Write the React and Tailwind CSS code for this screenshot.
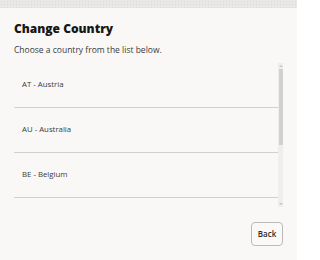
import React from "react";

const countries = ["AT - Austria", "AU - Australia", "BE - Belgium"];

export default function App() {
  return (
    <div className="w-[297px] h-[260px] bg-[#f9f8f7] flex flex-col overflow-hidden font-['Open_Sans',sans-serif] text-[#1f1f1f]">
      {/* textured top strip */}
      <div className="h-2 shrink-0 bg-[#e9e8e6] bg-[radial-gradient(#dcdad8_0.6px,transparent_0.8px)] bg-size-[3px_3px]" />

      <div className="flex flex-col px-[14px] pt-[13px]">
        <h2 className="text-[12px] leading-[16px] font-extrabold text-[#161616]">Change Country</h2>
        <p className="mt-[7px] text-[8.5px] leading-[12px] text-[#3a3a3a]">Choose a country from the list below.</p>

        {/* list with scrollbar */}
        <div className="mt-[7px] flex h-[144px]">
          <div className="flex-1 overflow-hidden">
            {countries.map((c) => (
              <div key={c} className="h-[45px] shrink-0 flex items-center pl-[8px] border-b border-[#d2d0ce] text-[7.8px] text-[#3a3a3a]">
                {c}
              </div>
            ))}
          </div>
          <div className="w-[5px] bg-[#efeeed] flex flex-col items-center">
            <div className="h-[6px] w-full flex items-center justify-center">
              <div className="w-0 h-0 border-x-[2px] border-x-transparent border-b-[2px] border-b-[#c8c6c4]" />
            </div>
            <div className="h-[76px] w-[4px] bg-[#d2d0ce]" />
            <div className="flex-1" />
            <div className="h-[6px] w-full flex items-center justify-center">
              <div className="w-0 h-0 border-x-[2px] border-x-transparent border-t-[2px] border-t-[#c8c6c4]" />
            </div>
          </div>
        </div>

        <div className="mt-[15px] flex justify-end">
          <button className="w-[32px] h-[24px] rounded-[4px] border border-[#bcbab8] bg-[#faf9f8] text-[8px] font-semibold text-[#2a2a2a]">
            Back
          </button>
        </div>
      </div>
    </div>
  );
}
